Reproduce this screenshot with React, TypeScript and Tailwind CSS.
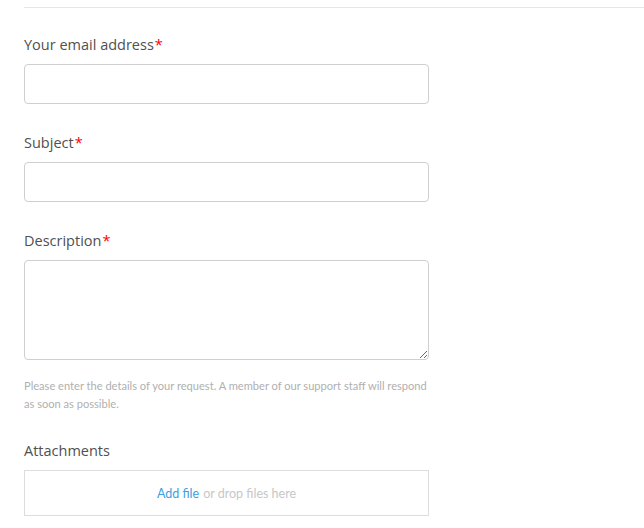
const FONT = { fontFamily: '"Open Sans", "Noto Sans", sans-serif' };
const SMALL = { fontFamily: 'Lato, "Open Sans", sans-serif' };

const Label = ({ text, required }: { text: string; required?: boolean }) => (
    <label className="block text-[14.5px] leading-[22px] text-[#505050] mb-[8px]">
        {text}
        {required && <span className="text-[#ff0000] ml-[1px]">*</span>}
    </label>
);

export default function App() {
    return (
        <div className="bg-white min-h-screen pl-6 pt-[7px]" style={FONT}>
            {/* top rule */}
            <div className="border-t border-[#e6e6e6]" />

            <form className="w-[405px] pt-[26px]">
                <div className="mb-[28px]">
                    <Label text="Your email address" required />
                    <input
                        type="email"
                        className="block w-full h-10 rounded border border-[#cfcfcf] bg-white px-2 outline-none"
                    />
                </div>

                <div className="mb-[28px]">
                    <Label text="Subject" required />
                    <input
                        type="text"
                        className="block w-full h-10 rounded border border-[#cfcfcf] bg-white px-2 outline-none"
                    />
                </div>

                <div className="mb-[27px]">
                    <Label text="Description" required />
                    <textarea className="block w-full h-[100px] rounded border border-[#cfcfcf] bg-white px-2 outline-none" />
                    <p className="mt-[17px] text-[11.1px] leading-[18px] text-[#b0b0b0]" style={SMALL}>
                        Please enter the details of your request. A member of our support staff will respond as soon as possible.
                    </p>
                </div>

                <div>
                    <Label text="Attachments" />
                    <div
                        className="flex h-[46px] items-center justify-center border border-[#dddddd] pt-[2px] text-[12.5px]"
                        style={SMALL}
                    >
                        <a className="text-[#3aa0de] cursor-pointer">Add file</a>
                        <span className="ml-1 text-[#c7c7c7]">or drop files here</span>
                    </div>
                </div>
            </form>
        </div>
    );
}
